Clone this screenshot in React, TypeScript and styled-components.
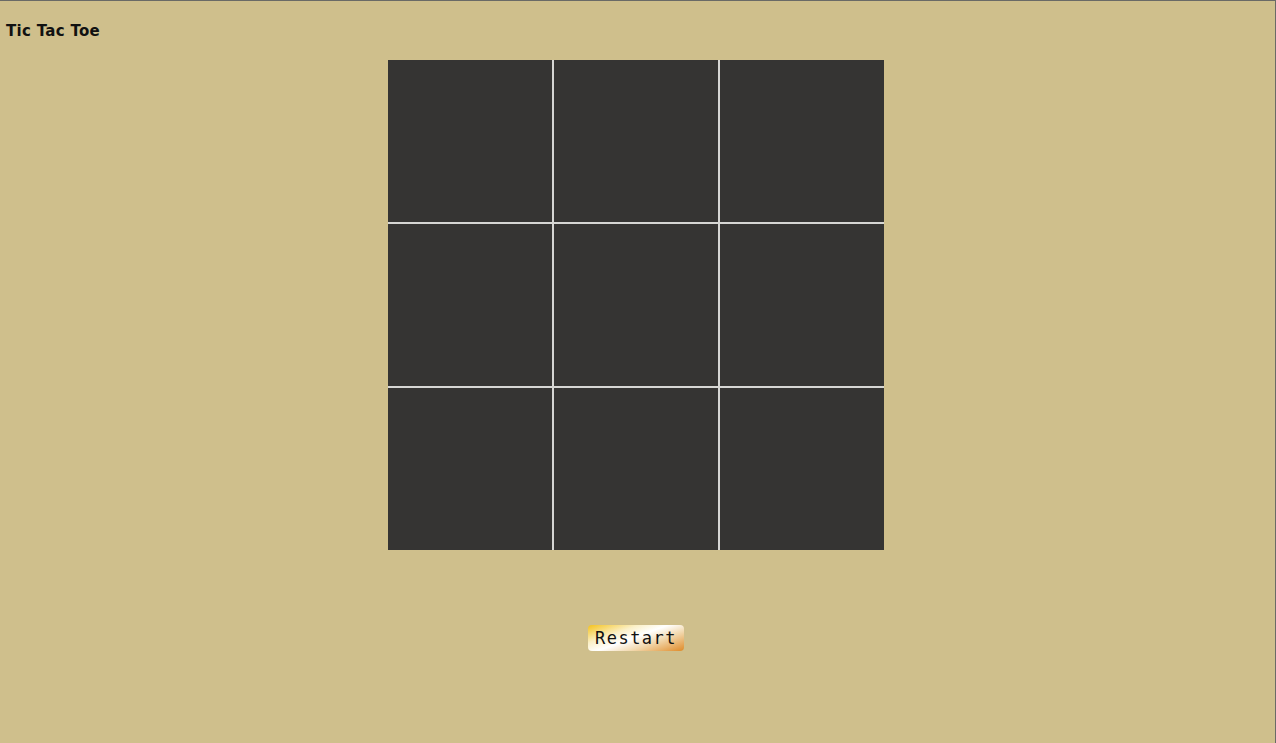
import styled, { createGlobalStyle } from 'styled-components';

const GlobalStyle = createGlobalStyle`
  html, body {
    margin: 0;
    padding: 0;
    background: #cfbf8c;
  }
`;

const Page = styled.div`
  box-sizing: border-box;
  min-height: 100vh;
  border-top: 1px solid #6a6a66;
  border-right: 1px solid #6a6a66;
  padding: 0 3px 0 0;
  background: #cfbf8c;
  font-family: "DejaVu Sans", "Liberation Sans", sans-serif;
`;

const Title = styled.h1`
  margin: 0;
  padding: 21px 0 0 6px;
  height: 39px;
  box-sizing: border-box;
  font-size: 15px;
  font-weight: bold;
  color: #111;
  letter-spacing: 0.3px;
`;

const Main = styled.main`
  display: flex;
  flex-direction: column;
  align-items: center;
  padding-top: 20px;
`;

const Board = styled.div`
  display: grid;
  grid-template-columns: repeat(3, 164px);
  grid-template-rows: repeat(3, 162px);
  gap: 2px;
  background: #d6d6d4;
`;

const Cell = styled.button`
  border: none;
  padding: 0;
  margin: 0;
  background: #353433;
  cursor: pointer;
`;

const RestartButton = styled.button`
  margin-top: 75px;
  width: 96px;
  height: 26px;
  border: none;
  border-radius: 4px;
  padding: 0;
  background: linear-gradient(160deg, #f4c21c 0%, #fbf0c8 30%, #ffffff 48%, #f2d8ad 68%, #df8a28 100%);
  font-family: "DejaVu Sans Mono", "Liberation Mono", monospace;
  font-size: 17px;
  letter-spacing: 1.5px;
  color: #111;
  cursor: pointer;
`;

const App = () => {
  const cells = Array.from({ length: 9 }, (_, i) => i);
  return (
    <>
      <GlobalStyle />
      <Page>
        <Title>Tic Tac Toe</Title>
        <Main>
          <Board>
            {cells.map((i) => (
              <Cell key={i} aria-label={`cell ${i + 1}`} />
            ))}
          </Board>
          <RestartButton>Restart</RestartButton>
        </Main>
      </Page>
    </>
  );
};

export default App;
